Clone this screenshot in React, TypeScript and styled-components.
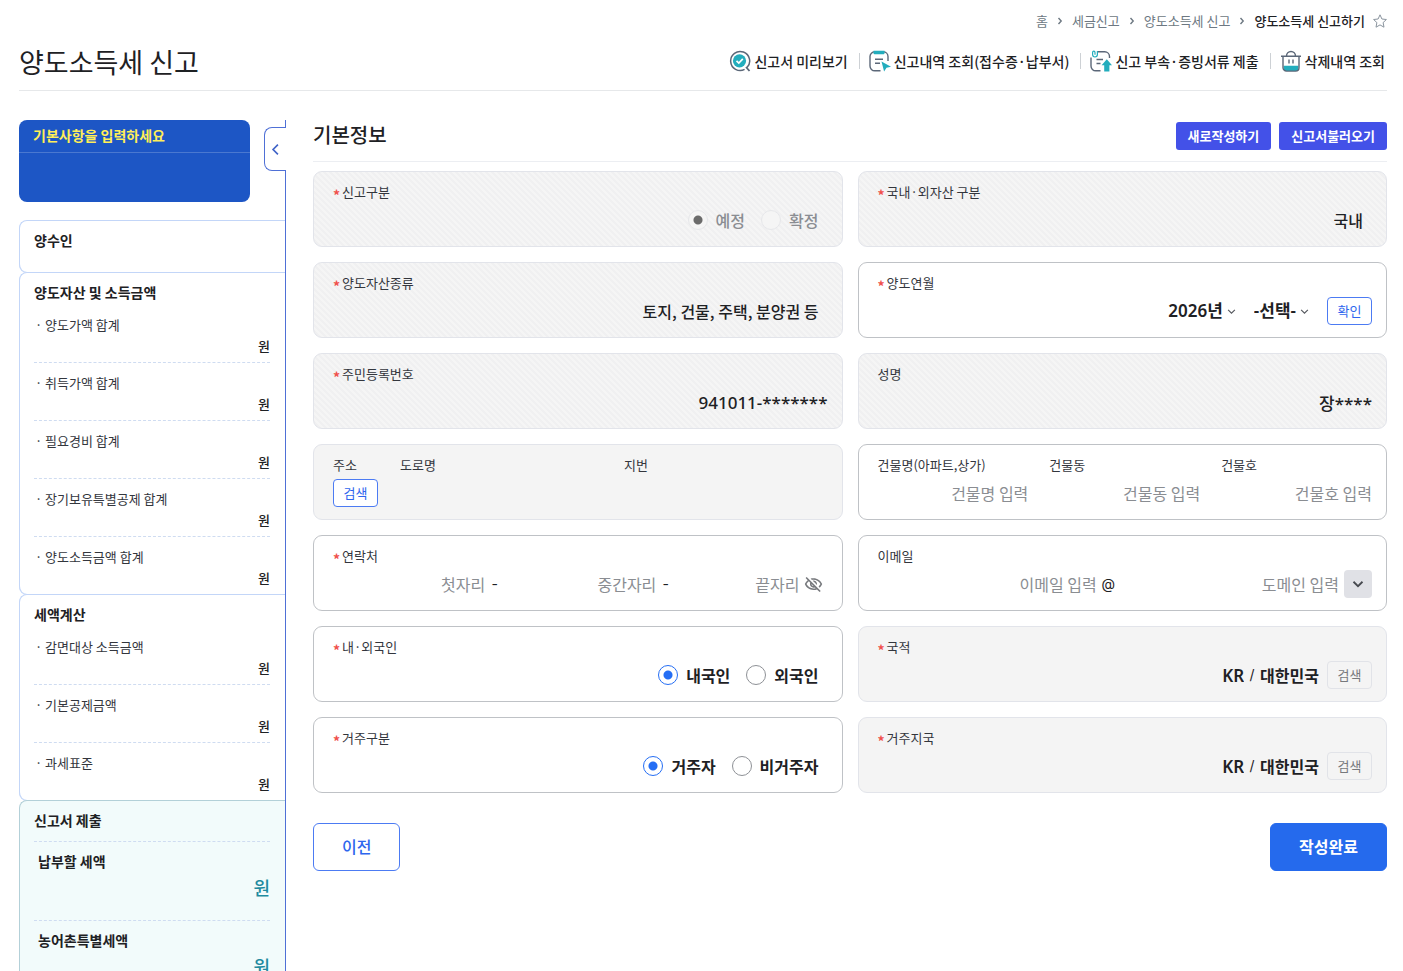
import React from 'react';
import styled, { createGlobalStyle, css } from 'styled-components';

const GlobalStyle = createGlobalStyle`
  *, *::before, *::after { box-sizing: border-box; }
  body {
    margin: 0;
    background: #fff;
    color: #1e2124;
    font-family: "Noto Sans CJK KR", sans-serif;
    font-size: 14px;
    line-height: 22px;
  }
  button, input, select { font: inherit; color: inherit; margin: 0; }
  button { cursor: pointer; }
`;

const Page = styled.div`
  padding: 10px 16px 0 19px;
`;

const Breadcrumb = styled.nav`
  display: flex;
  justify-content: flex-end;
  align-items: center;
  gap: 8px;
  height: 22px;
  font-size: 13px;
  color: #6d7882;
  a { color: inherit; text-decoration: none; }
  strong { font-weight: 500; color: #1e2124; }
`;

const StarButton = styled.button`
  display: flex;
  padding: 0;
  border: 0;
  background: none;
  color: #8a949e;
`;

const PageHeader = styled.header`
  display: flex;
  justify-content: space-between;
  align-items: center;
  height: 59px;
  border-bottom: 1px solid #e6e8ea;
`;

const PageTitle = styled.h1`
  margin: 0;
  padding-top: 2px;
  font-size: 27px;
  line-height: 36px;
  font-weight: 400;
`;

const Tools = styled.div`
  display: flex;
  align-items: center;
`;

const ToolButton = styled.button`
  display: flex;
  align-items: center;
  gap: 3px;
  height: 16px;
  padding: 0 2px 0 9px;
  border: 0;
  background: none;
  line-height: 16px;
  font-weight: 500;
  & + & { margin-left: 9px; border-left: 1px solid #cdd1d5; }
`;

const Body = styled.div`
  display: flex;
  align-items: stretch;
  gap: 27px;
  margin-top: 29px;
`;

const Sidebar = styled.aside`
  flex: 0 0 267px;
  border-right: 1px solid #4f70d6;
`;

const SideTop = styled.div`
  display: flex;
  justify-content: space-between;
  height: 100px;
`;

const Notice = styled.div`
  width: 231px;
  height: 82px;
  border-radius: 8px;
  background: #1d56c5;
  overflow: hidden;
`;

const NoticeTitle = styled.p`
  margin: 0;
  padding: 4px 14px 6px;
  border-bottom: 1px solid #4a78d0;
  color: #ffee58;
  font-weight: 700;
`;

const FoldButton = styled.button`
  display: flex;
  align-items: center;
  justify-content: center;
  position: relative;
  width: 22px;
  height: 44px;
  margin: 7px -1px 0 0;
  padding: 0;
  border: 1px solid #4f70d6;
  border-right: 0;
  border-radius: 8px 0 0 8px;
  background: #fff;
  color: #3f63c8;
`;

const SideSection = styled.section<{ $submit?: boolean }>`
  min-height: 52px;
  padding: 0 15px 0 14px;
  border: 1px solid ${p => (p.$submit ? '#b3d0d8' : '#c3d6f8')};
  border-width: 1px 0 0 1px;
  border-radius: 8px 0 0 8px;
  background: ${p => (p.$submit ? '#f2fbfb' : '#fff')};
  box-shadow: ${p => (p.$submit ? 'none' : '0 1px 0 #c3d6f8')};
`;

const SideHeading = styled.h2<{ $ruled?: boolean }>`
  margin: 0;
  padding: 8px 0 2px;
  font-size: 14px;
  line-height: 22px;
  font-weight: 700;
  ${p => p.$ruled && css`
    padding-bottom: 10px;
    border-bottom: 1px dashed #cfdcf1;
  `}
`;

const SideList = styled.dl`
  margin: 0;
`;

const SideItem = styled.div`
  padding: 9px 0 6px;
  font-size: 13px;
  line-height: 21px;
  & + & { border-top: 1px dashed #cfdcf1; }
  dt { display: flex; color: #33363d; }
  dt::before { content: "·"; width: 11px; padding-left: 1px; }
  dd { margin: 0; text-align: right; font-weight: 500; }
`;

const TotalItem = styled.div`
  padding: 8px 0 18px;
  & + & { border-top: 1px dashed #cfdcf1; }
  dt { padding-left: 4px; font-weight: 700; }
  dd { margin: 0; text-align: right; font-size: 18px; line-height: 30px; font-weight: 500; color: #1f8ba0; }
`;

const Main = styled.main`
  flex: 1;
  min-width: 0;
`;

const MainHeader = styled.div`
  display: flex;
  justify-content: space-between;
  align-items: center;
  height: 42px;
  padding-bottom: 10px;
  border-bottom: 1px solid #eceef2;
`;

const MainTitle = styled.h2`
  margin: 0;
  padding-bottom: 2px;
  font-size: 20px;
  line-height: 28px;
  font-weight: 500;
`;

const ButtonGroup = styled.div`
  display: flex;
  gap: 8px;
`;

const FilledButton = styled.button`
  height: 28px;
  padding: 0 12px;
  border: 0;
  border-radius: 3px;
  background: #4351e8;
  color: #fff;
  font-size: 13px;
  font-weight: 700;
`;

const FieldGrid = styled.div`
  display: grid;
  grid-template-columns: 1fr 1fr;
  gap: 15px;
  margin-top: 9px;
`;

const Card = styled.div<{ $tone?: 'striped' | 'muted' }>`
  display: flex;
  flex-direction: column;
  gap: 3px;
  min-width: 0;
  min-height: 76px;
  margin: 0;
  padding: 9px 14px 10px 19px;
  border: 1px solid ${p => (p.$tone ? '#e2e4ea' : '#bfc2c6')};
  border-radius: 9px;
  background: ${p => (p.$tone ? '#f4f4f4' : '#fff')};
  ${p => p.$tone === 'striped' && css`
    background: linear-gradient(45deg, #f5f5f5 25%, #f0f0f1 25% 50%, #f5f5f5 50% 75%, #f0f0f1 75%) 0 0 / 6px 6px;
  `}
`;

const Label = styled.label`
  display: block;
  font-size: 13px;
  line-height: 22px;
  color: #33363d;
  white-space: nowrap;
`;

const Star = styled.span`
  display: inline-block;
  width: 9px;
  height: 22px;
  vertical-align: top;
  padding-top: 3px;
  font-size: 14px;
  font-weight: 700;
  color: #f0504c;
`;

const Row = styled.div<{ $inset?: boolean; $gap?: number; $grow?: boolean }>`
  display: flex;
  align-items: center;
  justify-content: flex-end;
  gap: ${p => p.$gap ?? 0}px;
  ${p => p.$grow && css`flex: 1; min-width: 0;`}
  height: 28px;
  padding-right: ${p => (p.$inset ? 9 : 0)}px;
  font-size: 16px;
`;

const TextInput = styled.input<{ $fit?: boolean; $weight?: number; $code?: boolean }>`
  ${p => (p.$fit ? css`field-sizing: content;` : css`width: 100%;`)}
  min-width: 0;
  height: 28px;
  padding: 0;
  border: 0;
  outline: 0;
  background: transparent;
  text-align: right;
  font-size: 16px;
  font-weight: ${p => p.$weight ?? 400};
  ${p => p.$code && css`
    font-family: "Noto Sans", "Noto Sans CJK KR", sans-serif;
    font-size: 17px;
  `}
  &::placeholder { color: #8a8d92; opacity: 1; }
`;

const Picker = styled.span`
  display: flex;
  align-items: center;
  gap: 4px;
  color: #55585e;
`;

const Select = styled.select`
  appearance: none;
  field-sizing: content;
  padding: 0;
  border: 0;
  background: transparent;
  color: #1e2124;
  font-family: "Noto Sans", "Noto Sans CJK KR", sans-serif;
  font-size: 17px;
  font-weight: 600;
`;

const SmallButton = styled.button`
  flex: none;
  width: 45px;
  height: 28px;
  padding: 0;
  border: 1px solid #4c7bf3;
  border-radius: 4px;
  background: #fff;
  color: #2e66ee;
  font-size: 13px;
  line-height: 20px;
  &:disabled { border-color: #e1e3e8; background: #f4f4f4; color: #77797d; }
`;

const Separator = styled.span<{ $width: number }>`
  flex: none;
  width: ${p => p.$width}px;
  text-align: center;
  font-family: Inter, sans-serif;
  font-size: 14px;
  color: #1e2124;
`;

const IconButton = styled.button<{ $filled?: boolean }>`
  display: flex;
  flex: none;
  align-items: center;
  justify-content: center;
  width: 28px;
  height: 28px;
  padding: 0;
  margin-left: ${p => (p.$filled ? 5 : 0)}px;
  border: 0;
  border-radius: 4px;
  background: ${p => (p.$filled ? '#e0e1e6' : 'transparent')};
  color: #46494f;
`;

const AddressGrid = styled.div`
  display: grid;
  grid-template-columns: 67px 11fr 10fr;
`;

const BuildingGrid = styled.div`
  display: grid;
  grid-template-columns: repeat(3, 1fr);
  gap: 21px;
`;

const Stack = styled.div`
  display: flex;
  flex-direction: column;
  gap: 3px;
  min-width: 0;
`;

const RadioLabel = styled.label<{ $off?: boolean }>`
  display: flex;
  align-items: center;
  gap: 8px;
  font-weight: ${p => (p.$off ? 500 : 700)};
  color: ${p => (p.$off ? '#8a8d92' : '#1e2124')};
`;

const Radio = styled.input`
  appearance: none;
  width: 20px;
  height: 20px;
  margin: 0;
  border: 1px solid #8e9196;
  border-radius: 50%;
  background: #fff;
  &:checked {
    border-color: #256ef4;
    background: radial-gradient(circle, #256ef4 0 4px, #fff 5px);
  }
  &:disabled { border-color: #e6e7ea; background: #f5f5f5; }
  &:disabled:checked { background: radial-gradient(circle, #6b6b6b 0 4px, #f5f5f5 5px); }
`;

const Footer = styled.div`
  display: flex;
  justify-content: space-between;
  margin-top: 30px;
`;

const LargeButton = styled.button<{ $primary?: boolean }>`
  height: 48px;
  padding: 0 28px 2px;
  border: 1px solid ${p => (p.$primary ? '#256aed' : '#4c7bf3')};
  border-radius: 6px;
  background: ${p => (p.$primary ? '#256aed' : '#fff')};
  color: ${p => (p.$primary ? '#fff' : '#2e66ee')};
  font-size: 16px;
  font-weight: ${p => (p.$primary ? 700 : 500)};
`;

const Chevron = ({ d, size = 8, width = 1.4 }: { d: string; size?: number; width?: number }) => (
  <svg width={size} height={size} viewBox="0 0 8 8" fill="none" stroke="currentColor" strokeWidth={width} aria-hidden="true">
    <path d={d} />
  </svg>
);
const DOWN = 'M1 2.5 4 5.5 7 2.5';
const RIGHT = 'M2.5 1 5.2 4 2.5 7';
const LEFT = 'M5.5 1 2.5 4 5.5 7';

const PreviewIcon = () => (
  <svg width="22" height="22" viewBox="0 0 22 22" fill="none" aria-hidden="true">
    <path d="M18 17.6A9.5 9.5 0 1 0 15.6 19.4" stroke="#5b6778" strokeWidth="1.5" />
    <path d="M17 17 20.5 21" stroke="#5b6778" strokeWidth="1.8" />
    <circle cx="10.5" cy="10.8" r="6.6" fill="#23adbd" />
    <path d="m7.5 10.8 2.3 2.3 4-4.3" stroke="#fff" strokeWidth="1.7" />
  </svg>
);

const HistoryIcon = () => (
  <svg width="22" height="22" viewBox="0 0 22 22" fill="none" aria-hidden="true">
    <path d="M11.5 20.8H5.8A4.8 4.8 0 0 1 1 16V6.6A4.8 4.8 0 0 1 5.8 1.8h8.4A4.8 4.8 0 0 1 19 6.6V11" stroke="#5b6778" strokeWidth="1.4" />
    <path d="M4.5.8h11v2.4a1 1 0 0 1-1 1h-9a1 1 0 0 1-1-1Z" fill="#23adbd" />
    <path d="M6 9.3h8M6 13.3h5" stroke="#5b6778" strokeWidth="1.4" />
    <path d="m12.5 11.5 9.5 5.2-4.5 1-2.4 3.8Z" fill="#23adbd" />
  </svg>
);

const UploadIcon = () => (
  <svg width="22" height="22" viewBox="0 0 22 22" fill="none" aria-hidden="true">
    <path d="M10.5 20.8H5.8A4.8 4.8 0 0 1 1 16V7.5M8 1.8h6.7A4.8 4.8 0 0 1 19.5 6.6V8" stroke="#5b6778" strokeWidth="1.4" />
    <path d="M7.4 1v3.6a2.4 2.4 0 0 1-4.8 0V2.4a1.2 1.2 0 0 1 2.4 0v2.4" stroke="#23adbd" strokeWidth="1.2" />
    <path d="M6.5 9.5H13M6.5 13.5h4" stroke="#5b6778" strokeWidth="1.4" />
    <path d="m16.8 9.2 5.2 6h-2.6v6.3h-5.2v-6.3h-2.6Z" fill="#23adbd" />
  </svg>
);

const TrashIcon = () => (
  <svg width="22" height="22" viewBox="0 0 22 22" fill="none" aria-hidden="true">
    <path d="M3.6 15.8h14.8v2.6a2.6 2.6 0 0 1-2.6 2.6H6.2a2.6 2.6 0 0 1-2.6-2.6Z" fill="#23adbd" />
    <path d="M1 6.2h20M6.5 6a4.5 4.5 0 0 1 9 0M3 6.5v11.2a3.4 3.4 0 0 0 3.4 3.4h9.2a3.4 3.4 0 0 0 3.4-3.4V6.5" stroke="#5b6778" strokeWidth="1.4" />
    <path d="M9 9.5v4M13 9.5v4" stroke="#5b6778" strokeWidth="1.4" />
  </svg>
);

const StarIcon = () => (
  <svg width="14" height="14" viewBox="0 0 14 14" fill="none" stroke="currentColor" strokeLinejoin="round" aria-hidden="true">
    <path d="m7 .8 1.9 4.2 4.5.5-3.3 3.1.9 4.6L7 10.9l-4 2.3.9-4.6L.6 5.5 5.1 5Z" />
  </svg>
);

const EyeOffIcon = () => (
  <svg width="19" height="19" viewBox="0 0 24 24" fill="#77797d" aria-hidden="true">
    <path d="M12 6c3.79 0 7.17 2.13 8.82 5.5-.59 1.22-1.42 2.27-2.41 3.12l1.41 1.41c1.39-1.23 2.49-2.77 3.18-4.53C21.27 7.11 17 4 12 4c-1.27 0-2.49.2-3.64.57l1.65 1.65C10.66 6.09 11.32 6 12 6zm-1.07 1.14L13 9.21c.57.25 1.03.71 1.28 1.28l2.07 2.07c.08-.34.14-.7.14-1.07C16.5 9.01 14.48 7 12 7c-.37 0-.72.05-1.07.14zM2.01 3.87l2.68 2.68C3.06 7.83 1.77 9.53 1 11.5 2.73 15.89 7 19 12 19c1.52 0 2.98-.29 4.32-.82l3.42 3.42 1.41-1.41L3.42 2.45 2.01 3.87zm7.5 7.5 2.61 2.61c-.04.01-.08.02-.12.02-1.38 0-2.5-1.12-2.5-2.5 0-.05.01-.08.01-.13zm-3.4-3.4 1.75 1.75c-.23.55-.36 1.15-.36 1.78 0 2.48 2.02 4.5 4.5 4.5.63 0 1.23-.13 1.77-.36l.98.98c-.88.24-1.8.38-2.75.38-3.79 0-7.17-2.13-8.82-5.5.7-1.43 1.72-2.61 2.93-3.53z" />
  </svg>
);

type CaptionProps = { children: React.ReactNode; required?: boolean; htmlFor?: string };
const Caption = ({ children, required, htmlFor }: CaptionProps) => (
  <Label as={htmlFor ? 'label' : 'div'} htmlFor={htmlFor}>
    {required && <Star>*</Star>}
    {children}
  </Label>
);

type RadioCardProps = { label: string; name: string; options: string[]; disabled?: boolean };
const RadioCard = ({ label, name, options, disabled }: RadioCardProps) => (
  <Card $tone={disabled ? 'striped' : undefined} role="radiogroup" aria-label={label}>
    <Caption required>{label}</Caption>
    <Row $inset $gap={16}>
      {options.map((option, i) => (
        <RadioLabel key={option} $off={disabled}>
          <Radio type="radio" name={name} defaultChecked={i === 0} disabled={disabled} />
          {option}
        </RadioLabel>
      ))}
    </Row>
  </Card>
);

type ReadonlyCardProps = { id: string; label: string; value: string; required?: boolean; inset?: boolean; code?: boolean };
const ReadonlyCard = ({ id, label, value, required, inset, code }: ReadonlyCardProps) => (
  <Card $tone="striped">
    <Caption required={required} htmlFor={id}>{label}</Caption>
    <Row $inset={inset}>
      <TextInput id={id} readOnly value={value} $weight={500} $code={code} />
    </Row>
  </Card>
);

const CountryCard = ({ id, label }: { id: string; label: string }) => (
  <Card $tone="muted">
    <Caption required htmlFor={id}>{label}</Caption>
    <Row $gap={8}>
      <Row>
        <TextInput id={id} readOnly value="KR" $fit $weight={600} $code />
        <Separator $width={16}>/</Separator>
        <TextInput aria-label={`${label} 이름`} readOnly value="대한민국" $fit $weight={700} />
      </Row>
      <SmallButton disabled>검색</SmallButton>
    </Row>
  </Card>
);

const incomeItems = ['양도가액 합계', '취득가액 합계', '필요경비 합계', '장기보유특별공제 합계', '양도소득금액 합계'];
const taxItems = ['감면대상 소득금액', '기본공제금액', '과세표준'];
const totalItems = ['납부할 세액', '농어촌특별세액'];
const buildingFields = [
  { id: 'building-name', label: '건물명(아파트,상가)', hint: '건물명 입력' },
  { id: 'building-block', label: '건물동', hint: '건물동 입력' },
  { id: 'building-unit', label: '건물호', hint: '건물호 입력' },
];

const AmountList = ({ items }: { items: string[] }) => (
  <SideList>
    {items.map(item => (
      <SideItem key={item}>
        <dt>{item}</dt>
        <dd>원</dd>
      </SideItem>
    ))}
  </SideList>
);

export default function App() {
  return (
    <Page>
      <GlobalStyle />
      <Breadcrumb aria-label="현재 위치">
        <a href="#home">홈</a>
        <Chevron d={RIGHT} />
        <a href="#tax">세금신고</a>
        <Chevron d={RIGHT} />
        <a href="#transfer">양도소득세 신고</a>
        <Chevron d={RIGHT} />
        <strong>양도소득세 신고하기</strong>
        <StarButton aria-label="즐겨찾기"><StarIcon /></StarButton>
      </Breadcrumb>
      <PageHeader>
        <PageTitle>양도소득세 신고</PageTitle>
        <Tools>
          <ToolButton><PreviewIcon />신고서 미리보기</ToolButton>
          <ToolButton><HistoryIcon />신고내역 조회(접수증·납부서)</ToolButton>
          <ToolButton><UploadIcon />신고 부속·증빙서류 제출</ToolButton>
          <ToolButton><TrashIcon />삭제내역 조회</ToolButton>
        </Tools>
      </PageHeader>

      <Body>
        <Sidebar>
          <SideTop>
            <Notice><NoticeTitle>기본사항을 입력하세요</NoticeTitle></Notice>
            <FoldButton aria-label="접기"><Chevron d={LEFT} size={13} width={1} /></FoldButton>
          </SideTop>
          <SideSection><SideHeading>양수인</SideHeading></SideSection>
          <SideSection>
            <SideHeading>양도자산 및 소득금액</SideHeading>
            <AmountList items={incomeItems} />
          </SideSection>
          <SideSection>
            <SideHeading>세액계산</SideHeading>
            <AmountList items={taxItems} />
          </SideSection>
          <SideSection $submit>
            <SideHeading $ruled>신고서 제출</SideHeading>
            <SideList>
              {totalItems.map(item => (
                <TotalItem key={item}>
                  <dt>{item}</dt>
                  <dd>원</dd>
                </TotalItem>
              ))}
            </SideList>
          </SideSection>
        </Sidebar>

        <Main>
          <MainHeader>
            <MainTitle>기본정보</MainTitle>
            <ButtonGroup>
              <FilledButton>새로작성하기</FilledButton>
              <FilledButton>신고서불러오기</FilledButton>
            </ButtonGroup>
          </MainHeader>
          <FieldGrid>
            <RadioCard label="신고구분" name="report" options={['예정', '확정']} disabled />
            <ReadonlyCard id="region" label="국내·외자산 구분" value="국내" required inset />
            <ReadonlyCard id="asset" label="양도자산종류" value="토지, 건물, 주택, 분양권 등" required inset />
            <Card>
              <Caption required htmlFor="year">양도연월</Caption>
              <Row $gap={18}>
                <Picker>
                  <Select id="year"><option>2026년</option></Select>
                  <Chevron d={DOWN} size={9} width={1} />
                </Picker>
                <Picker>
                  <Select aria-label="양도월"><option>-선택-</option></Select>
                  <Chevron d={DOWN} size={9} width={1} />
                </Picker>
                <SmallButton>확인</SmallButton>
              </Row>
            </Card>
            <ReadonlyCard id="rrn" label="주민등록번호" value="941011-*******" required code />
            <ReadonlyCard id="name" label="성명" value="장****" code />
            <Card $tone="muted">
              <AddressGrid>
                <Stack>
                  <Caption>주소</Caption>
                  <SmallButton>검색</SmallButton>
                </Stack>
                <Caption>도로명</Caption>
                <Caption>지번</Caption>
              </AddressGrid>
            </Card>
            <Card>
              <BuildingGrid>
                {buildingFields.map(field => (
                  <Stack key={field.id}>
                    <Caption htmlFor={field.id}>{field.label}</Caption>
                    <TextInput id={field.id} placeholder={field.hint} />
                  </Stack>
                ))}
              </BuildingGrid>
            </Card>
            <Card>
              <Caption required htmlFor="phone-first">연락처</Caption>
              <Row>
                <Row $grow><TextInput id="phone-first" placeholder="첫자리" /></Row>
                <Separator $width={19}>-</Separator>
                <Row $grow><TextInput aria-label="중간자리" placeholder="중간자리" /></Row>
                <Separator $width={19}>-</Separator>
                <Row $grow>
                  <TextInput aria-label="끝자리" placeholder="끝자리" />
                  <IconButton aria-label="번호 표시"><EyeOffIcon /></IconButton>
                </Row>
              </Row>
            </Card>
            <Card>
              <Caption htmlFor="email">이메일</Caption>
              <Row>
                <Row $grow><TextInput id="email" placeholder="이메일 입력" /></Row>
                <Separator $width={23}>@</Separator>
                <Row $grow><TextInput aria-label="도메인" placeholder="도메인 입력" /></Row>
                <IconButton $filled aria-label="도메인 선택"><Chevron d={DOWN} size={12} width={1.2} /></IconButton>
              </Row>
            </Card>
            <RadioCard label="내·외국인" name="citizen" options={['내국인', '외국인']} />
            <CountryCard id="nationality" label="국적" />
            <RadioCard label="거주구분" name="resident" options={['거주자', '비거주자']} />
            <CountryCard id="residence" label="거주지국" />
          </FieldGrid>
          <Footer>
            <LargeButton>이전</LargeButton>
            <LargeButton $primary>작성완료</LargeButton>
          </Footer>
        </Main>
      </Body>
    </Page>
  );
}
